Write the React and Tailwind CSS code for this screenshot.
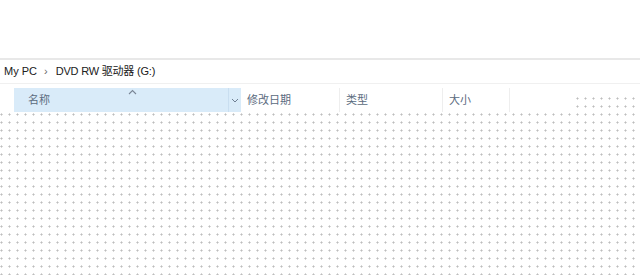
import React from 'react';

const dots =
  'bg-[radial-gradient(circle_at_1.5px_1.5px,#bdbdbd_0.8px,transparent_1.3px)] bg-size-[8px_8px]';

const columns = [
  { label: '修改日期', width: 'w-[99px]' },
  { label: '类型', width: 'w-[103px]' },
  { label: '大小', width: 'w-[67px]' },
];

const App = () => {
  return (
    <div
      className="w-[640px] h-[275px] overflow-hidden bg-white text-[11px]"
      style={{ fontFamily: '"Liberation Sans", "Noto Sans CJK SC", sans-serif' }}
    >
      {/* ribbon area */}
      <div className="h-[58px] bg-white" />
      <div className="h-[2px] bg-[#e8e8e8]" />

      {/* breadcrumb */}
      <div className="h-[23px] flex items-center pl-[4px] text-[#202020]">
        <span>My PC</span>
        <span className="text-[#666] ml-[7px] mr-[8px]">›</span>
        <span className="tracking-[-0.2px]">DVD RW 驱动器 (G:)</span>
      </div>
      <div className="h-px bg-[#f0f0f0]" />

      {/* list area */}
      <div className={`h-[191px] ${dots}`} style={{ backgroundPosition: '0px 13px' }}>
        <div className="flex h-[28px]">
          <div className="w-[574px] h-[28px] bg-white flex pt-[4px]">
            <div className="w-[14px]" />
            <div className="relative w-[227px] h-[24px] bg-[#d9ebf9] flex items-center">
              <span className="pl-[14px] text-[#5b6b80]">名称</span>
              <svg
                className="absolute left-[114px] top-[1px]"
                width="9"
                height="6"
                viewBox="0 0 9 6"
              >
                <path d="M1 5 L4.5 1.5 L8 5" fill="none" stroke="#7a8696" strokeWidth="1.1" />
              </svg>
              <div className="absolute right-0 top-0 h-full w-[13px] border-l border-[#c9def0] flex items-center justify-center">
                <svg width="8" height="5" viewBox="0 0 8 5">
                  <path d="M1 1 L4 4 L7 1" fill="none" stroke="#6f7f93" strokeWidth="1" />
                </svg>
              </div>
            </div>
            {columns.map((col) => (
              <div
                key={col.label}
                className={`${col.width} h-[24px] flex items-center pl-[6px] border-r border-[#eeeeee] text-[#5b6b80]`}
              >
                {col.label}
              </div>
            ))}
          </div>
          <div className="flex-1 h-[13px] bg-white" />
        </div>
      </div>
    </div>
  );
};

export default App;
